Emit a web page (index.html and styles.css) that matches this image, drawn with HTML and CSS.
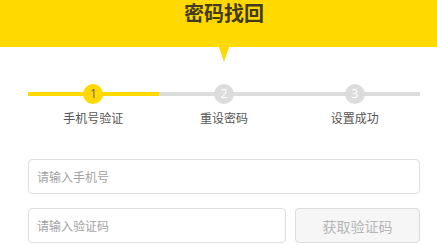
FILE: index.html
```html
<!DOCTYPE html>
<html lang="zh">
<head>
<meta charset="utf-8">
<title>密码找回</title>
<link rel="stylesheet" href="styles.css">
</head>
<body>
<header class="header">
  <h1 class="title">密码找回</h1>
  <span class="pointer"></span>
</header>
<main class="content">
  <ol class="steps">
    <li class="step done">
      <div class="track"><span class="dot">1</span></div>
      <div class="label">手机号验证</div>
    </li>
    <li class="step">
      <div class="track"><span class="dot">2</span></div>
      <div class="label">重设密码</div>
    </li>
    <li class="step">
      <div class="track"><span class="dot">3</span></div>
      <div class="label">设置成功</div>
    </li>
  </ol>
  <form class="form">
    <input class="field" type="text" placeholder="请输入手机号">
    <div class="row">
      <input class="field code" type="text" placeholder="请输入验证码">
      <button class="btn" type="button" disabled>获取验证码</button>
    </div>
  </form>
</main>
</body>
</html>
```
FILE: styles.css
```css
html, body {
  margin: 0;
  padding: 0;
  background: #fff;
  font-family: "Noto Sans CJK SC", "Noto Sans", sans-serif;
}
.header {
  position: relative;
  height: 47px;
  background: #ffd900;
}
.title {
  margin: 0;
  padding: 1px 0 0 11px;
  text-align: center;
  font-size: 20px;
  line-height: 24px;
  font-weight: 700;
  color: #433a16;
}
.pointer {
  position: absolute;
  left: 219px;
  top: 47px;
  width: 0;
  height: 0;
  border-left: 5px solid transparent;
  border-right: 5px solid transparent;
  border-top: 15px solid #ffd900;
}
.content {
  width: 392px;
  padding-left: 28px;
}
.steps {
  list-style: none;
  margin: 37px 0 0;
  padding: 0;
  display: flex;
}
.step {
  flex: 1;
  display: flex;
  flex-direction: column;
  align-items: center;
}
.track {
  position: relative;
  width: 100%;
  height: 20px;
  display: flex;
  justify-content: center;
  align-items: center;
}
.track::before {
  content: "";
  position: absolute;
  left: 0;
  right: 0;
  top: 8px;
  height: 4px;
  background: #dcdcdc;
}
.done .track::before {
  background: #ffd900;
}
.dot {
  position: relative;
  width: 20px;
  height: 20px;
  border-radius: 50%;
  background: #dcdcdc;
  color: #fff;
  font-family: "Open Sans", sans-serif;
  font-size: 12px;
  line-height: 20px;
  text-align: center;
}
.done .dot {
  background: #ffd900;
  color: #666;
}
.label {
  margin-top: 6px;
  font-size: 12px;
  line-height: 16px;
  color: #555;
}
.form {
  margin-top: 33px;
  display: flex;
  flex-direction: column;
  gap: 14px;
}
.row {
  display: flex;
  gap: 9px;
}
.field {
  box-sizing: border-box;
  width: 100%;
  height: 35px;
  margin: 0;
  padding: 0 8px;
  border: 1px solid #dedede;
  border-radius: 4px;
  font-family: inherit;
  font-size: 12px;
  color: #333;
  outline: none;
}
.field::placeholder {
  color: #a3a3a3;
}
.code {
  width: 258px;
  flex: none;
}
.btn {
  box-sizing: border-box;
  flex: 1;
  height: 35px;
  margin: 0;
  border: 1px solid #dcdcdc;
  border-radius: 4px;
  background: #f6f6f6;
  font-family: inherit;
  font-size: 14px;
  color: #b5b5b5;
}
```
